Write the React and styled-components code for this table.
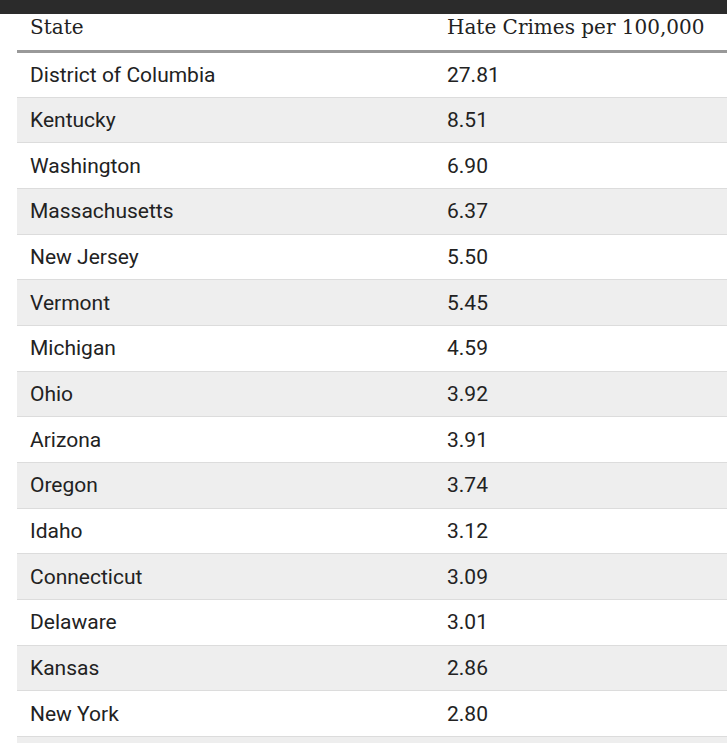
import styled, { createGlobalStyle } from "styled-components";

const GlobalStyle = createGlobalStyle`
  html, body {
    margin: 0;
    padding: 0;
    background: #fff;
    overflow: hidden;
  }
`;

const TopBar = styled.div`
  height: 14px;
  background: #2b2b2b;
`;

const Wrapper = styled.div`
  padding-left: 17px;
  width: 800px;
`;

const Table = styled.table`
  width: 760px;
  border-collapse: collapse;
  table-layout: fixed;
  color: #222;
`;

const HeadCell = styled.th`
  text-align: left;
  font-family: "DejaVu Serif", "Liberation Serif", serif;
  font-weight: normal;
  font-size: 20px;
  height: 36px;
  padding: 0 0 0 13px;
  vertical-align: top;
  line-height: 26px;
  border-bottom: 3px solid #999;
  width: ${(p) => p.$width || "auto"};
`;

const Row = styled.tr`
  background: ${(p) => (p.$shaded ? "#eeeeee" : "#ffffff")};
`;

const Cell = styled.td`
  font-family: Roboto, "Noto Sans", sans-serif;
  font-size: 21px;
  height: 45.66px;
  padding: 0 0 0 13px;
  border-bottom: 1px solid #dcdcdc;
  vertical-align: middle;
  box-sizing: border-box;
`;

const rows = [
  ["District of Columbia", "27.81"],
  ["Kentucky", "8.51"],
  ["Washington", "6.90"],
  ["Massachusetts", "6.37"],
  ["New Jersey", "5.50"],
  ["Vermont", "5.45"],
  ["Michigan", "4.59"],
  ["Ohio", "3.92"],
  ["Arizona", "3.91"],
  ["Oregon", "3.74"],
  ["Idaho", "3.12"],
  ["Connecticut", "3.09"],
  ["Delaware", "3.01"],
  ["Kansas", "2.86"],
  ["New York", "2.80"],
  ["North Dakota", "2.79"],
];

export default function App() {
  return (
    <>
      <GlobalStyle />
      <TopBar />
      <Wrapper>
        <Table>
          <thead>
            <tr>
              <HeadCell $width="404px">State</HeadCell>
              <HeadCell>Hate Crimes per 100,000</HeadCell>
            </tr>
          </thead>
          <tbody>
            {rows.map(([state, rate], i) => (
              <Row key={state} $shaded={i % 2 === 1}>
                <Cell>{state}</Cell>
                <Cell>{rate}</Cell>
              </Row>
            ))}
          </tbody>
        </Table>
      </Wrapper>
    </>
  );
}
